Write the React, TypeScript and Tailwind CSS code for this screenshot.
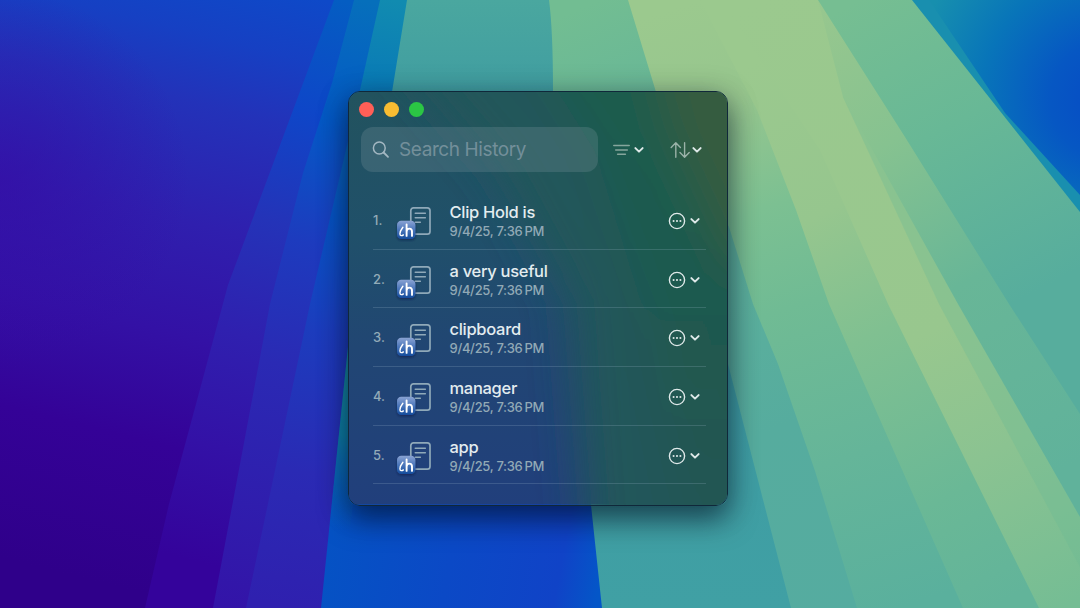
import React from "react";

const items = ["Clip Hold is", "a very useful", "clipboard", "manager", "app"];

function Wallpaper() {
  return (
    <svg className="absolute inset-0 h-full w-full" viewBox="0 0 1080 608" preserveAspectRatio="none" aria-hidden="true">
      <defs>
        <linearGradient id="base" x1="280" y1="-10" x2="130" y2="590" gradientUnits="userSpaceOnUse">
          <stop offset="0" stopColor="#0e49c8" />
          <stop offset=".1" stopColor="#1640c3" />
          <stop offset=".21" stopColor="#2332b9" />
          <stop offset=".4" stopColor="#2f1fae" />
          <stop offset=".58" stopColor="#3311a5" />
          <stop offset=".76" stopColor="#340297" />
          <stop offset="1" stopColor="#2f008a" />
        </linearGradient>
        <radialGradient id="leftGlow" cx="0" cy="180" r="190" gradientUnits="userSpaceOnUse">
          <stop offset="0" stopColor="#360aa4" stopOpacity=".6" />
          <stop offset="1" stopColor="#360aa4" stopOpacity="0" />
        </radialGradient>
        <linearGradient id="rayA" x1="340" y1="0" x2="190" y2="560" gradientUnits="userSpaceOnUse">
          <stop offset="0" stopColor="#045dc2" />
          <stop offset=".2" stopColor="#0e46c8" />
          <stop offset=".4" stopColor="#2433b8" />
          <stop offset=".6" stopColor="#2f20af" />
          <stop offset=".8" stopColor="#3311a6" />
          <stop offset="1" stopColor="#34039b" />
        </linearGradient>
        <linearGradient id="rayB" x1="360" y1="0" x2="240" y2="608" gradientUnits="userSpaceOnUse">
          <stop offset="0" stopColor="#066fbb" />
          <stop offset=".2" stopColor="#0459c6" />
          <stop offset=".4" stopColor="#1d3bbe" />
          <stop offset=".6" stopColor="#2a2ab4" />
          <stop offset="1" stopColor="#3314a8" />
        </linearGradient>
        <linearGradient id="rayC" x1="390" y1="0" x2="300" y2="608" gradientUnits="userSpaceOnUse">
          <stop offset="0" stopColor="#118bb0" />
          <stop offset=".17" stopColor="#0877b8" />
          <stop offset=".36" stopColor="#0654c4" />
          <stop offset=".55" stopColor="#1c3cbd" />
          <stop offset=".78" stopColor="#2a2ab4" />
          <stop offset="1" stopColor="#2f20af" />
        </linearGradient>
        <linearGradient id="teal" x1="0" y1="0" x2="0" y2="608" gradientUnits="userSpaceOnUse">
          <stop offset="0" stopColor="#4aa79f" />
          <stop offset=".16" stopColor="#409da1" />
          <stop offset=".6" stopColor="#3e9ca3" />
          <stop offset="1" stopColor="#40a0a4" />
        </linearGradient>
        <linearGradient id="floor" x1="330" y1="530" x2="600" y2="580" gradientUnits="userSpaceOnUse">
          <stop offset="0" stopColor="#0552c4" />
          <stop offset=".45" stopColor="#0b49c6" />
          <stop offset=".85" stopColor="#1043c7" />
          <stop offset="1" stopColor="#0456c8" />
        </linearGradient>
        <linearGradient id="sliver" x1="0" y1="340" x2="0" y2="530" gradientUnits="userSpaceOnUse">
          <stop offset="0" stopColor="#1b8f9d" />
          <stop offset=".5" stopColor="#0d80a8" />
          <stop offset="1" stopColor="#0b68b8" stopOpacity="0" />
        </linearGradient>
        <linearGradient id="green" x1="600" y1="0" x2="860" y2="608" gradientUnits="userSpaceOnUse">
          <stop offset="0" stopColor="#72bd92" />
          <stop offset=".3" stopColor="#60b29b" />
          <stop offset=".7" stopColor="#56ac9e" />
          <stop offset="1" stopColor="#55aca0" />
        </linearGradient>
        <linearGradient id="lime" x1="700" y1="0" x2="900" y2="608" gradientUnits="userSpaceOnUse">
          <stop offset="0" stopColor="#9bc98e" />
          <stop offset=".16" stopColor="#97c68e" />
          <stop offset=".34" stopColor="#7cc092" />
          <stop offset=".5" stopColor="#70bb94" />
          <stop offset=".75" stopColor="#65b599" />
          <stop offset="1" stopColor="#5ab09d" />
        </linearGradient>
        <linearGradient id="limeB" x1="720" y1="80" x2="990" y2="608" gradientUnits="userSpaceOnUse">
          <stop offset="0" stopColor="#9bc98e" />
          <stop offset=".28" stopColor="#96c68e" />
          <stop offset=".5" stopColor="#80c091" />
          <stop offset=".8" stopColor="#6ab896" />
          <stop offset="1" stopColor="#62b49a" />
        </linearGradient>
        <linearGradient id="limeC" x1="760" y1="0" x2="1060" y2="608" gradientUnits="userSpaceOnUse">
          <stop offset="0" stopColor="#9bc98e" />
          <stop offset=".55" stopColor="#98c78e" />
          <stop offset=".75" stopColor="#8bc391" />
          <stop offset="1" stopColor="#75bd94" />
        </linearGradient>
        <linearGradient id="mint" x1="820" y1="0" x2="1080" y2="460" gradientUnits="userSpaceOnUse">
          <stop offset="0" stopColor="#98c78e" />
          <stop offset=".3" stopColor="#86c290" />
          <stop offset=".6" stopColor="#68b697" />
          <stop offset="1" stopColor="#60b29b" />
        </linearGradient>
        <linearGradient id="sea" x1="860" y1="0" x2="1020" y2="300" gradientUnits="userSpaceOnUse">
          <stop offset="0" stopColor="#76be92" />
          <stop offset=".45" stopColor="#68b896" />
          <stop offset="1" stopColor="#57ad9d" />
        </linearGradient>
        <radialGradient id="sky" cx="1110" cy="100" r="200" gradientUnits="userSpaceOnUse">
          <stop offset="0" stopColor="#064ac5" />
          <stop offset=".3" stopColor="#0657c3" />
          <stop offset=".65" stopColor="#0875b9" />
          <stop offset="1" stopColor="#178fae" />
        </radialGradient>
      </defs>
      <rect width="1080" height="608" fill="url(#base)" />
      <rect width="200" height="400" fill="url(#leftGlow)" />
      <path d="M334 0L228 285L196 404L169 504L145 608H420V0Z" fill="url(#rayA)" />
      <path d="M354 0L332 83L303 173L270 304L213 608H420V0Z" fill="url(#rayB)" />
      <path d="M380 0L360 90L310 304L246 608H420V0Z" fill="url(#rayC)" />
      <path d="M407 0L392 92L380 180H500V608H1080V0Z" fill="url(#teal)" />
      <path d="M369 230L348 347L321 608H602L591 505L570 300Z" fill="url(#floor)" />
      <path d="M369 230L348 347L329 530H350L370 347Z" fill="url(#sliver)" />
      <path d="M549 0Q553 30 553 92L728 364L791 608H1080V0Z" fill="url(#green)" />
      <path d="M628 0L656 92L729 227L753 304L778 364L815 471L857 608H1080V0Z" fill="url(#lime)" />
      <path d="M700 0L757 110L796 210L829 304L963 608H1080V0Z" fill="url(#limeB)" />
      <path d="M720 0L820 150L888 304L1039 608H1080V0Z" fill="url(#limeC)" />
      <path d="M843 97L939 304L1080 567V0Z" fill="#6cba94" fillOpacity=".35" />
      <path d="M818 0H1080V517L958 304L843 97Z" fill="url(#mint)" />
      <path d="M818 0L905 137L1009 304L1080 414V0Z" fill="url(#sea)" />
      <path d="M912 0L1080 212V0Z" fill="#198faf" />
      <path d="M929 0L1005 113L1080 195V0Z" fill="url(#sky)" />
    </svg>
  );
}

function GlassTint() {
  return (
    <svg className="absolute inset-0 h-full w-full" viewBox="348 91 380 414" preserveAspectRatio="none" aria-hidden="true">
      <defs>
        <linearGradient id="tint" x1="0" y1="91" x2="0" y2="505" gradientUnits="userSpaceOnUse">
          <stop offset="0" stopColor="#22535e" />
          <stop offset=".35" stopColor="#20506a" />
          <stop offset=".62" stopColor="#214673" />
          <stop offset="1" stopColor="#213f7c" />
        </linearGradient>
        <linearGradient id="moss" x1="0" y1="91" x2="0" y2="505" gradientUnits="userSpaceOnUse">
          <stop offset="0" stopColor="#1f5b4e" />
          <stop offset=".5" stopColor="#1f5a4f" />
          <stop offset="1" stopColor="#225652" />
        </linearGradient>
        <filter id="soft" x="-30%" y="-30%" width="160%" height="160%">
          <feGaussianBlur stdDeviation="22" />
        </filter>
      </defs>
      <rect x="348" y="91" width="380" height="414" fill="url(#tint)" />
      <g filter="url(#soft)">
        <path d="M380 30L500 170L570 300L590 570H850V30Z" fill="#21565a" />
        <path d="M520 30L595 150L650 330L690 570H850V30Z" fill="url(#moss)" />
        <path d="M645 30L670 130L735 270H850V30Z" fill="#365c41" />
      </g>
    </svg>
  );
}

function Chevron() {
  return (
    <svg className="h-[6px] w-[10px] shrink-0" viewBox="0 0 10 6" fill="none" stroke="#dfe9e9" strokeWidth="2" strokeLinecap="round" strokeLinejoin="round">
      <path d="M1.4 1.1L5 4.6L8.6 1.1" />
    </svg>
  );
}

function ClipIcon() {
  return (
    <svg className="h-[42px] w-[44px] shrink-0" viewBox="0 0 44 42" fill="none">
      <defs>
        <linearGradient id="badge" x1="0" y1="0" x2="0" y2="1">
          <stop offset="0" stopColor="#8aa3d3" />
          <stop offset=".5" stopColor="#4a76bb" />
          <stop offset="1" stopColor="#134b9b" />
        </linearGradient>
        <filter id="drop" x="-30%" y="-30%" width="160%" height="170%">
          <feDropShadow dx="0" dy="1.3" stdDeviation="1.2" floodColor="#0a1c48" floodOpacity=".65" />
        </filter>
      </defs>
      <rect x="17.8" y="7.8" width="19.2" height="26.4" rx="2.7" stroke="#8fa9b9" strokeWidth="1.7" />
      <path d="M22.2 13.2H32.4M22.2 17.7H32.4M22.2 22.2H27.4" stroke="#8fa9b9" strokeWidth="1.4" strokeLinecap="round" />
      <rect x="4" y="20.7" width="18.4" height="18.4" rx="4.2" fill="url(#badge)" filter="url(#drop)" />
      <path d="M9.9 27.2C8.5 29 6.9 31.8 6.9 33.8C6.9 36 8.9 36.1 10.4 34.9" stroke="#fff" strokeWidth="1.4" strokeLinecap="round" />
      <path d="M13.6 24.4V35.9M13.6 31.8C13.6 29.8 14.8 28.6 16.4 28.6C18.1 28.6 19 29.7 19 31.6V35.9" stroke="#fff" strokeWidth="1.9" strokeLinecap="round" />
    </svg>
  );
}

function Row({ index, title }: { index: number; title: string }) {
  return (
    <li className="flex h-[58.7px] items-center border-b border-[#a9c4d8]/20 pt-[2px]">
      <span className="w-[20px] text-[13px] font-medium text-[#93abb8]">{index}.</span>
      <ClipIcon />
      <div className="ml-[12.5px] flex-1">
        <div className="text-[16.5px] leading-[20px] font-medium tracking-[-0.3px] whitespace-nowrap text-[#e3ecef]">{title}</div>
        <div className="text-[13px] leading-[18px] font-medium tracking-[-0.3px] whitespace-nowrap text-[#91a9b6]">9/4/25, 7:36{"\u2009"}PM</div>
      </div>
      <button className="mr-[6px] flex items-center gap-[4px]" aria-label="More">
        <svg className="h-[18px] w-[18px]" viewBox="0 0 18 18" fill="none">
          <circle cx="9" cy="9" r="7.6" stroke="#dfe9e9" strokeWidth="1.4" />
          <circle cx="5.6" cy="9" r="1.05" fill="#dfe9e9" />
          <circle cx="9" cy="9" r="1.05" fill="#dfe9e9" />
          <circle cx="12.4" cy="9" r="1.05" fill="#dfe9e9" />
        </svg>
        <Chevron />
      </button>
    </li>
  );
}

export default function App() {
  return (
    <div className="relative flex h-[608px] w-[1080px] items-start overflow-hidden pt-[91px] pl-[348px] font-['Inter',sans-serif]">
      <Wallpaper />
      <main className="relative h-[414.5px] w-[379.5px] overflow-hidden rounded-[12px] border border-[#10283a] shadow-[0_14px_28px_rgba(0,12,30,0.5),0_4px_30px_rgba(0,12,30,0.25)]">
        <GlassTint />
        <div className="relative">
          <div className="flex h-[35px] items-center gap-[9.6px] pl-[9.5px]">
            <span className="h-[15.5px] w-[15.5px] rounded-full bg-[#ff5f57]" />
            <span className="h-[15.5px] w-[15.5px] rounded-full bg-[#f8bc32]" />
            <span className="h-[15.5px] w-[15.5px] rounded-full bg-[#2bc644]" />
          </div>
          <div className="flex items-center pl-[12px]">
            <div className="flex h-[45px] w-[237px] items-center rounded-[12px] bg-[#8ca0a8]/23 pl-[11px]">
              <svg className="h-[18px] w-[18px]" viewBox="0 0 18 18" fill="none" stroke="#a3b7c2" strokeWidth="1.5" strokeLinecap="round">
                <circle cx="7.3" cy="7" r="5.9" />
                <path d="M11.7 11.5L16 15.8" strokeWidth="1.8" />
              </svg>
              <span className="ml-[9px] pt-[1.5px] text-[19px] tracking-[-0.4px] whitespace-nowrap text-[#738f9a]">Search History</span>
            </div>
            <div className="ml-[14.5px] flex items-center gap-[4.5px] pt-[1px]">
              <svg className="h-[12px] w-[17px]" viewBox="0 0 17 12" fill="none" stroke="#86a69d" strokeWidth="1.5" strokeLinecap="round">
                <path d="M.8 1.5H16.2M2.7 6H14.3M4.6 10.3H12.4" />
              </svg>
              <Chevron />
            </div>
            <div className="ml-[26px] flex items-center gap-[2px] pt-[1px]">
              <svg className="h-[18px] w-[20px]" viewBox="0 0 20 18" fill="none" stroke="#9ab2a8" strokeWidth="1.4" strokeLinecap="round" strokeLinejoin="round">
                <path d="M5.8 16.2V2M1.2 6.4L5.8 1.8L10.4 6.4M14.6 1.8V16M10 11.6L14.6 16.2L19.2 11.6" />
              </svg>
              <Chevron />
            </div>
          </div>
          <ol className="mt-[19px] mr-[21px] ml-[24px]">
            {items.map((title, i) => (
              <Row key={title} index={i + 1} title={title} />
            ))}
          </ol>
        </div>
      </main>
    </div>
  );
}
